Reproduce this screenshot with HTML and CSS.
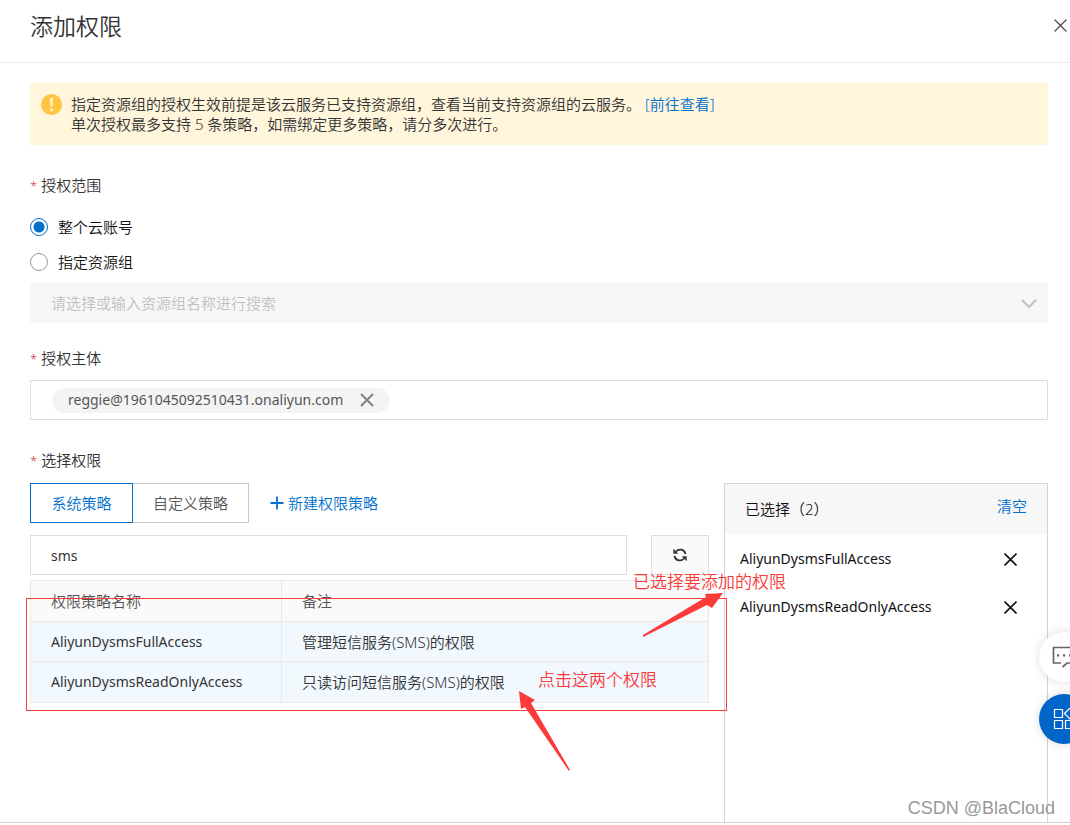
FILE: index.html
```html
<!DOCTYPE html>
<html lang="zh-CN">
<head>
<meta charset="utf-8">
<meta name="viewport" content="width=device-width, initial-scale=1">
<title>添加权限</title>
<link rel="stylesheet" href="styles.css">
</head>
<body>
<div class="drawer">
  <header class="drawer-header">
    <h1 class="title">添加权限</h1>
    <button class="icon-btn close" type="button" aria-label="关闭">
      <svg width="13" height="13" viewBox="0 0 13 13"><path d="M0.5 0.5L12.5 12.5M12.5 0.5L0.5 12.5" stroke="#444" stroke-width="1.1" fill="none"/></svg>
    </button>
  </header>

  <form class="drawer-body">
    <div class="alert">
      <svg class="alert-icon" width="21" height="21" viewBox="0 0 21 21"><circle cx="10.5" cy="10.5" r="10.5" fill="#ffc440"/><path d="M9.1 4h2.8l-.4 8.4h-2z" fill="#fff6dc"/><rect x="9.2" y="14.4" width="2.6" height="2.6" fill="#fff6dc"/></svg>
      <div>
        <p>指定资源组的授权生效前提是该云服务已支持资源组，查看当前支持资源组的云服务。 <a class="link" href="#">[前往查看]</a></p>
        <p>单次授权最多支持 5 条策略，如需绑定更多策略，请分多次进行。</p>
      </div>
    </div>

    <fieldset class="field scope">
      <legend class="label">授权范围</legend>
      <label class="radio-row"><input class="radio" type="radio" name="scope" checked>整个云账号</label>
      <label class="radio-row"><input class="radio" type="radio" name="scope">指定资源组</label>
      <div class="select-wrap">
        <select class="select" disabled aria-label="资源组">
          <option>请选择或输入资源组名称进行搜索</option>
        </select>
        <svg class="chevron" width="16" height="9" viewBox="0 0 16 9"><path d="M1 1l7 7 7-7" stroke="#c1c1c1" stroke-width="2" fill="none"/></svg>
      </div>
    </fieldset>

    <div class="field principal">
      <label class="label" for="principal">授权主体</label>
      <div class="tag-box">
        <span class="tag latin">reggie@1961045092510431.onaliyun.com
          <button class="icon-btn" type="button" aria-label="移除">
            <svg width="14" height="14" viewBox="0 0 14 14"><path d="M1 1l12 12M13 1L1 13" stroke="#808080" stroke-width="1.9" fill="none"/></svg>
          </button>
        </span>
        <input class="tag-input" id="principal" type="text">
      </div>
    </div>

    <div class="field policies">
      <label class="label" for="search">选择权限</label>
      <div class="columns">
        <section class="source">
          <div class="toolbar">
            <div class="tabs">
              <button class="tab active" type="button">系统策略</button>
              <button class="tab" type="button">自定义策略</button>
            </div>
            <a class="link create" href="#">
              <svg width="14" height="14" viewBox="0 0 14 14"><path d="M7 0.500v13M0.500 7h13" stroke="#0070cc" stroke-width="1.800" fill="none"/></svg>新建权限策略</a>
          </div>
          <div class="search-row">
            <input class="search latin" id="search" type="text" value="sms">
            <button class="refresh" type="button" aria-label="刷新">
              <svg width="14" height="14" viewBox="0 0 14 14" fill="none" stroke="#333" stroke-width="1.800"><path d="M3 3.500C5.500 0.500 11.500 0.800 12.500 6M11 10.500C8.500 13.500 2.500 13.200 1.500 8"/><path d="M0.300 0.800v5h5zM13.700 13.200v-5h-5z" fill="#333" stroke="none"/></svg>
            </button>
          </div>
          <table class="table">
            <thead><tr><th class="col-name">权限策略名称</th><th>备注</th></tr></thead>
            <tbody>
              <tr><td class="latin">AliyunDysmsFullAccess</td><td>管理短信服务(SMS)的权限</td></tr>
              <tr><td class="latin">AliyunDysmsReadOnlyAccess</td><td>只读访问短信服务(SMS)的权限</td></tr>
            </tbody>
          </table>
        </section>

        <section class="selected">
          <div class="selected-head"><span class="count">已选择（2）</span><a class="link" href="#">清空</a></div>
          <ul class="selected-list">
            <li class="selected-item latin">AliyunDysmsFullAccess
              <button class="icon-btn" type="button" aria-label="移除"><svg width="13" height="13" viewBox="0 0 13 13"><path d="M0.500 0.500l12 12M12.500 0.500l-12 12" stroke="#111" stroke-width="1.600" fill="none"/></svg></button></li>
            <li class="selected-item latin">AliyunDysmsReadOnlyAccess
              <button class="icon-btn" type="button" aria-label="移除"><svg width="13" height="13" viewBox="0 0 13 13"><path d="M0.500 0.500l12 12M12.500 0.500l-12 12" stroke="#111" stroke-width="1.600" fill="none"/></svg></button></li>
          </ul>
        </section>
      </div>
    </div>
  </form>
</div>

<div class="float-bar">
  <button class="float-btn" type="button" aria-label="反馈">
    <svg width="24" height="22" viewBox="0 0 24 22" fill="none" stroke="#666" stroke-width="1.700"><path d="M9 17H1.500V1.500h21V17H15l-4.500 4"/><path d="M5 8.200h2.200v2.200H5zM11 8.200h2.200v2.200H11zM17 8.200h2.200v2.200H17z" fill="#666" stroke="none"/></svg>
  </button>
  <button class="float-btn primary" type="button" aria-label="应用">
    <svg width="22" height="22" viewBox="0 0 22 22" fill="none" stroke="#fff" stroke-width="1.200"><path d="M1.500 1.500h8v8h-8zM1.500 12.500h8v8h-8zM12.500 12.500h8v8h-8zM11.500 5.500L17 0 22.500 5.500 17 11z"/></svg>
  </button>
</div>

<div class="annotations">
  <div class="note-box"></div>
  <svg class="arrow arrow-up" width="80" height="44" viewBox="0 0 80 44"><path d="M80 0L62 1 63 4 0 42 0 44 64 12 69 15z" fill="#fb3a3a"/></svg>
  <svg class="arrow arrow-down" width="52" height="80" viewBox="0 0 52 80"><path d="M0 0L16 9 12 12 51 79 50 80 6 16 2 18z" fill="#fb3a3a"/></svg>
  <span class="note note-selected">已选择要添加的权限</span>
  <span class="note note-click">点击这两个权限</span>
</div>
<span class="watermark">CSDN @BlaCloud</span>
</body>
</html>
```
FILE: styles.css
```css
* { box-sizing: border-box; }

body {
  margin: 0;
  position: relative;
  overflow: hidden;
  background: #fff;
  color: #333;
  font: 350 15px/20px "Noto Sans", "Noto Sans CJK SC", sans-serif;
}

button, input, select { font: inherit; color: inherit; }
p, h1, ul, fieldset { margin: 0; padding: 0; }
button { cursor: pointer; }
.latin { font-size: 14px; font-weight: 400; }

.drawer {
  display: flex;
  flex-direction: column;
  height: calc(100vh - 2px);
  border-bottom: 1px solid #d4d4d4;
}
.drawer-header {
  display: flex;
  justify-content: space-between;
  align-items: flex-start;
  padding: 10px 3px 20px 30px;
  border-bottom: 1px solid #ebebeb;
}
.title { font-size: 23px; line-height: 32px; font-weight: 350; }
.icon-btn { display: flex; padding: 0; border: 0; background: none; }
.close { margin-top: 9px; }

.drawer-body {
  flex: 1;
  display: flex;
  flex-direction: column;
  padding: 20px 22px 0 30px;
}
.link { color: #0070cc; text-decoration: none; }

.alert {
  display: flex;
  gap: 9px;
  padding: 11px;
  background: #fff6dc;
}
.alert-icon { flex: none; }

.field { border: 0; }
.label { display: block; padding: 0; }
.label::before { content: "*"; margin-right: 4px; color: #d93026; font-size: 13px; line-height: 1; }
.scope { margin-top: 30px; }
.radio-row { display: flex; align-items: center; gap: 10px; margin-bottom: 15px; color: #111; }
.label + .radio-row { margin-top: 22px; }
.radio {
  appearance: none;
  width: 18px;
  height: 18px;
  margin: 0;
  border: 1px solid #999;
  border-radius: 50%;
  background: #fff;
}
.radio:checked { border-color: #0070cc; background: radial-gradient(circle, #0070cc 5px, #fff 6px); }

.select-wrap { display: grid; align-items: center; margin-top: -4px; }
.select {
  grid-area: 1 / 1;
  appearance: none;
  width: 100%;
  height: 40px;
  padding: 0 21px;
  border: 0;
  border-radius: 0;
  background: #f7f7f7;
  color: #c1c1c1;
  opacity: 1;
}
.chevron { grid-area: 1 / 1; justify-self: end; margin-right: 11px; }

.principal { margin-top: 25px; }
.tag-box {
  display: flex;
  align-items: center;
  height: 40px;
  margin-top: 12px;
  padding: 0 21px;
  border: 1px solid #dedede;
}
.tag {
  display: flex;
  align-items: center;
  gap: 17px;
  height: 25px;
  padding: 0 16px;
  border-radius: 13px;
  background: #f4f4f4;
  color: #555;
}
.tag-input { flex: 1; min-width: 0; border: 0; outline: 0; background: none; }

.policies { flex: 1; display: flex; flex-direction: column; margin-top: 30px; }
.columns {
  flex: 1;
  display: grid;
  grid-template-columns: minmax(0, 1fr) 324px;
  gap: 15px;
  margin-top: 13px;
}
.toolbar { display: flex; align-items: center; gap: 21px; }
.tabs { display: flex; }
.tab { height: 40px; padding: 0 20px; border: 1px solid #c8c8c8; border-left: 0; background: #fff; color: #555; }
.tab.active { min-width: 103px; border: 1px solid #0070cc; color: #0070cc; }
.create { display: flex; align-items: center; gap: 4px; }

.search-row { display: flex; gap: 24px; margin-top: 12px; }
.search { flex: 1; min-width: 0; height: 40px; padding: 0 20px; border: 1px solid #dedede; }
.refresh {
  display: flex;
  align-items: center;
  justify-content: center;
  width: 58px;
  height: 40px;
  border: 1px solid #dedede;
  background: #fafafa;
}

.table {
  width: 100%;
  margin-top: 5px;
  border-collapse: collapse;
  table-layout: fixed;
}
.table th, .table td { height: 40px; padding: 0 20px; border: 1px solid #e8e8e8; text-align: left; }
.table th { height: 41px; background: #fafafa; color: #555; font-weight: 350; }
.table td { background: #f1f9ff; }
.table tr:last-child td { height: 41px; }
.col-name { width: 251px; }

.selected { border: 1px solid #d4d4d4; border-bottom: 0; color: #111; }
.selected-head {
  display: flex;
  justify-content: space-between;
  align-items: flex-start;
  height: 50px;
  padding: 12px 20px;
  background: #f7f7f7;
}
.count { padding-top: 3px; }
.selected-list { padding: 1px 15px; list-style: none; }
.selected-item { display: flex; justify-content: space-between; align-items: center; height: 48px; padding-right: 15px; }

.float-bar {
  position: fixed;
  top: 632px;
  right: -19px;
  display: flex;
  flex-direction: column;
  gap: 12px;
}
.float-btn {
  display: flex;
  align-items: center;
  justify-content: center;
  width: 50px;
  height: 50px;
  padding: 0;
  border: 0;
  border-radius: 50%;
  background: #fff;
  box-shadow: 0 0 10px rgba(0, 0, 0, 0.15);
}
.float-btn.primary { background: #0064c8; }

.annotations { position: absolute; top: 0; left: 0; pointer-events: none; color: #fb3a3a; }
.note-box { position: absolute; top: 598px; left: 26px; width: 701px; height: 113px; border: 1px solid #fb3a3a; }
.note { position: absolute; font-size: 17px; line-height: 24px; white-space: nowrap; }
.note-selected { top: 570px; left: 633px; }
.note-click { top: 668px; left: 538px; }
.arrow { position: absolute; }
.arrow-up { top: 593px; left: 643px; }
.arrow-down { top: 691px; left: 519px; }

.watermark {
  position: absolute;
  top: 797px;
  right: 15px;
  color: #999;
  font: 18px/22px "Liberation Sans", sans-serif;
}
```
